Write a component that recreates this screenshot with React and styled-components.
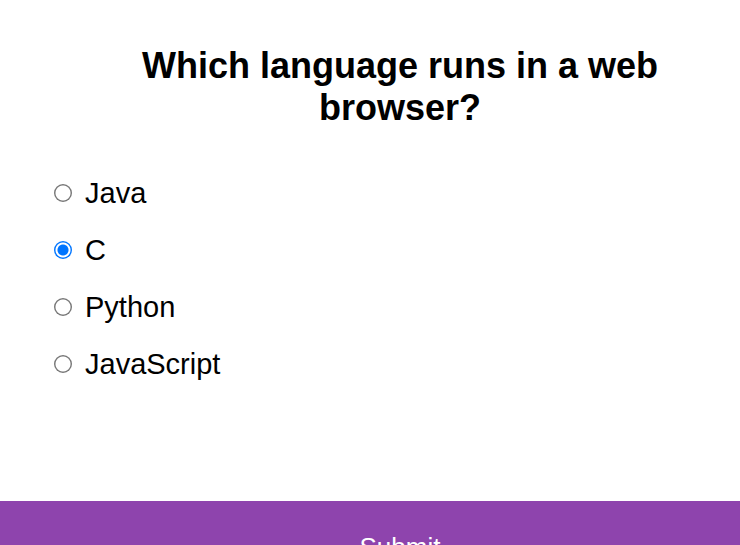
import React, { useState } from "react";
import styled, { createGlobalStyle } from "styled-components";

const GlobalStyle = createGlobalStyle`
  * { box-sizing: border-box; }
  body {
    margin: 0;
    background: #fff;
    color: #000;
    font-family: "Liberation Sans", Arial, sans-serif;
    overflow: hidden;
  }
`;

const Quiz = styled.form`
  min-width: 800px;
`;

const Body = styled.div`
  padding: 45px 50px 109px;
`;

const Question = styled.h2`
  margin: 0;
  padding: 0 80px 35px;
  font-size: 36px;
  line-height: 42px;
  text-align: center;
`;

const Options = styled.ul`
  list-style: none;
  margin: 0;
  padding: 0;
`;

const Option = styled.li`
  display: flex;
  align-items: center;
  gap: 13px;
  height: 57px;
`;

const Radio = styled.input`
  appearance: none;
  display: grid;
  place-items: center;
  width: 18px;
  height: 18px;
  margin: 0 0 0 4px;
  border-radius: 50%;
  background: radial-gradient(circle, transparent 7px, #767676 8px);

  &:checked {
    background: radial-gradient(
      circle,
      #0075ff 5px,
      transparent 6px,
      transparent 7px,
      #0075ff 8px
    );
  }
`;

const Label = styled.label`
  padding-top: 2px;
  font-size: 29px;
  line-height: 33px;
`;

const Submit = styled.button`
  display: block;
  width: 100%;
  padding: 30px;
  border: 0;
  background: #8e44ad;
  color: #fff;
  font-family: inherit;
  font-size: 26px;
  line-height: 32px;
  cursor: pointer;
`;

const answers = ["Java", "C", "Python", "JavaScript"];

export default function App() {
  const [selected, setSelected] = useState("C");
  return (
    <>
      <GlobalStyle />
      <Quiz onSubmit={(e) => e.preventDefault()}>
        <Body>
          <Question>Which language runs in a web browser?</Question>
          <Options>
            {answers.map((answer) => (
              <Option key={answer}>
                <Radio
                  type="radio"
                  name="answer"
                  id={answer}
                  checked={selected === answer}
                  onChange={() => setSelected(answer)}
                />
                <Label htmlFor={answer}>{answer}</Label>
              </Option>
            ))}
          </Options>
        </Body>
        <Submit type="submit">Submit</Submit>
      </Quiz>
    </>
  );
}
